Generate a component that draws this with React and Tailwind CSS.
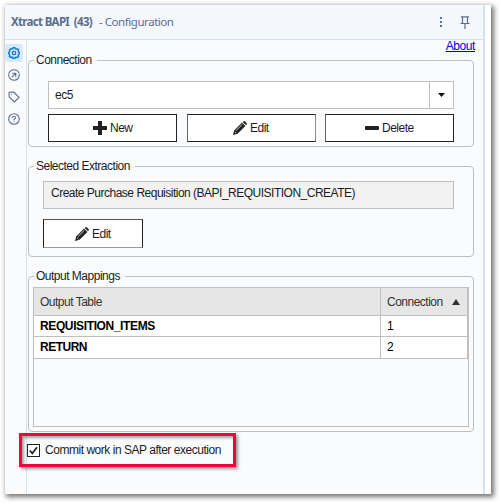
import React from "react";

function Group({ title, className, children }) {
  return (
    <fieldset className={"w-[446px] min-w-0 rounded-[4px] border border-[#bfbfbf] pl-[5px] " + className}>
      <legend className="h-[17px] pr-[5px] pl-[2px] leading-[17px] whitespace-nowrap">{title}</legend>
      {children}
    </fieldset>
  );
}

function Pencil() {
  return (
    <svg width="14" height="14" viewBox="0 0 14 14" className="shrink-0">
      <path d="M0 14 1.2 9.4 9 1.6 12.4 5 4.6 12.8Z" fill="#222" />
      <path d="M9.7.9 10.5.2Q11.2-.2 12 .4L13.6 2Q14.2 2.8 13.6 3.5L13 4.2Z" fill="#222" />
      <path d="M3.2 9.4 9.3 3.3M2 10.8 3.4 12.1" stroke="#eee" strokeWidth=".8" fill="none" />
    </svg>
  );
}

function Button({ icon, label, className }) {
  return (
    <button className={"flex shrink-0 items-center gap-[3px] border bg-white " + className}>
      {icon}
      {label}
    </button>
  );
}

function SideIcon({ active, children }) {
  return (
    <div className={"flex h-[18px] w-[18px] items-center justify-center rounded-[3px] " + (active ? "bg-[#d5eafd] text-[#1479d2]" : "text-[#5d6d8e]")}>
      <svg width="12" height="12" viewBox="0 0 12 12" fill="none" stroke="currentColor" strokeWidth="1.1" strokeLinecap="round" strokeLinejoin="round">
        {children}
      </svg>
    </div>
  );
}

export default function App() {
  return (
    <div className="h-[503px] w-[500px] overflow-hidden bg-white pt-[5px] pl-[5px] font-['Liberation_Sans',sans-serif] text-[12px] leading-[16px] tracking-[-0.5px] text-[#1c1c1c]">
      <div className="flex h-[489px] w-[486px] bg-white shadow-[2px_2px_5px_1px_rgba(0,0,0,0.55)]">
        <div className="flex w-[478px] flex-col">
          <header className="flex h-[35px] shrink-0 items-center border-b border-[#d6e0ef] bg-[#f4f8fd] pl-[6px] font-['Noto_Sans',sans-serif] text-[#5d6d8e]">
            <span className="w-[88px] text-[11.5px] font-bold tracking-[-0.68px] whitespace-nowrap">Xtract BAPI&nbsp; (43)</span>
            <span className="text-[11.5px] tracking-[-0.45px] whitespace-nowrap">- Configuration</span>
            <svg className="mr-[17px] ml-auto" width="4" height="12" fill="#5d6d8e">
              <path d="M1 1h2v2H1zM1 5h2v2H1zM1 9h2v2H1z" />
            </svg>
            <svg className="mt-px mr-[13px]" width="10" height="13" viewBox="0 0 10 13" fill="none" stroke="#5d6d8e" strokeWidth="1.2">
              <path d="M1 .8h8M2.5 1v6M7.5 1v6M.5 7.5h9M5 8v5" />
            </svg>
          </header>
          <div className="flex min-h-0 grow bg-[#fafbfd]">
            <nav className="flex w-[22px] shrink-0 flex-col gap-[4px] border-r border-[#d6e0ef] pt-[4px]">
              <SideIcon active>
                <path d="M5 .7h2l.4 1.2 1 .4 1.1-.5 1.2 1.3-.5 1.1.4 1 1 .4v1.2l-1.1.5-.4 1 .5 1.1-1.3 1.2-1.1-.5-1 .4-.3 1H5.1l-.4-1.1-1-.4-1.1.5-1.3-1.2.5-1.1-.4-1-1-.4V5.4l1.1-.4.4-1-.5-1.1 1.3-1.2 1.1.5 1-.4Z" strokeWidth="1.4" />
                <circle cx="6" cy="6" r="1.7" strokeWidth="1.3" />
              </SideIcon>
              <SideIcon>
                <circle cx="6" cy="6" r="5.3" strokeDasharray="13 1.2 2 1.2" />
                <path d="M4.2 7.8 7.6 4.4M4.6 4.2h3.2v3.2" />
              </SideIcon>
              <SideIcon>
                <path d="M1 1.2 5.8 1 11 6.4 6.4 11 1.2 5.8Z" />
                <path d="M3.3 3.3h.1" />
              </SideIcon>
              <SideIcon>
                <circle cx="6" cy="6" r="5.3" />
                <path d="M4.4 4.8Q4.5 3.3 6 3.3T7.6 4.7Q7.6 5.5 6 6.4V7M6 8.7v.1" />
              </SideIcon>
            </nav>
            <main className="flex min-w-0 grow flex-col pl-px">
              <div className="flex h-[12px] shrink-0 justify-end pr-[8px]">
                <a className="h-[12px] leading-[13px] tracking-[-0.4px] text-[#0000ee] underline">About</a>
              </div>
              <Group title="Connection" className="h-[95px]">
                <div className="mt-[12px] ml-[14px] flex h-[28px] w-[406px] border border-[#bfbfbf] bg-white">
                  <span className="grow pl-[6px] leading-[26px]">ec5</span>
                  <span className="flex w-[24px] items-center justify-center border-l border-[#bfbfbf]">
                    <svg width="7" height="4" fill="#111"><path d="M0 0h7L3.5 4Z" /></svg>
                  </span>
                </div>
                <div className="mt-[5px] ml-[14px] flex">
                  <Button className="h-[28px] w-[129px] border-[#222] pl-[44px]" label="New" icon={<svg width="14" height="14" fill="#222"><path d="M5 0h4v5h5v4H9v5H5V9H0V5h5Z" /></svg>} />
                  <Button className="ml-[10px] h-[28px] w-[129px] border-[#222] border-r-[#888] border-l-[#666] pl-[45px]" label="Edit" icon={<Pencil />} />
                  <Button className="ml-[9px] h-[28px] w-[129px] border-[#222] border-l-[#666] pl-[39px]" label="Delete" icon={<svg width="14" height="4" fill="#222"><rect width="14" height="4" rx="1" /></svg>} />
                </div>
              </Group>
              <Group title="Selected Extraction" className="mt-[11px] h-[99px]">
                <div className="mt-[6px] ml-[9px] h-[28px] w-[411px] border border-[#bfbfbf] bg-[#f2f2f2] pl-[7px] leading-[22px] whitespace-nowrap">Create Purchase Requisition (BAPI_REQUISITION_CREATE)</div>
                <Button className="mt-[10px] ml-[9px] h-[29px] w-[100px] border-[#222] border-t-[#555] border-b-[#999] pl-[31px]" label="Edit" icon={<Pencil />} />
              </Group>
              <Group title="Output Mappings" className="mt-[11px] h-[164px]">
                <div className="mt-[2px] -ml-px h-[140px] w-[436px] border border-[#bfbfbf]">
                  <div className="flex h-[28px] border-b border-[#bfbfbf] bg-[#e6e6e6] leading-[28px] text-[#333]">
                    <span className="w-[347px] border-r border-[#bfbfbf] pl-[6px]">Output Table</span>
                    <span className="flex grow items-center border-r border-[#bfbfbf] pl-[6px]">
                      Connection
                      <svg className="mr-[7px] ml-auto" width="8" height="6" fill="#333"><path d="M0 6h8L4 0Z" /></svg>
                    </span>
                  </div>
                  <div className="flex h-[21px] border-b border-[#bfbfbf] bg-white leading-[20px] text-black">
                    <span className="w-[347px] border-r border-[#bfbfbf] pl-[6px] font-bold tracking-[-0.38px]">REQUISITION_ITEMS</span>
                    <span className="grow border-r border-[#bfbfbf] pl-[6px]">1</span>
                  </div>
                  <div className="flex h-[22px] border-b border-[#bfbfbf] bg-white leading-[21px] text-black">
                    <span className="w-[347px] border-r border-[#bfbfbf] pl-[6px] font-bold">RETURN</span>
                    <span className="grow border-r border-[#bfbfbf] pl-[6px]">2</span>
                  </div>
                </div>
              </Group>
              <div className="mt-px -ml-[9px] flex h-[34px] w-[217px] shrink-0 items-center border-[3px] border-[#f7003c] pl-[5px] shadow-[2px_2px_3px_rgba(0,0,0,0.4),inset_2px_2px_3px_rgba(0,0,0,0.35)]">
                <svg className="mr-[5px] shrink-0" width="13" height="13" viewBox="0 0 13 13">
                  <rect x=".5" y=".5" width="12" height="12" fill="#fff" stroke="#222" />
                  <path d="m2.8 6.5 2.5 2.8L10 3.2" fill="none" stroke="#222" strokeWidth="1.7" />
                </svg>
                <span className="mb-px tracking-[-0.47px] whitespace-nowrap">Commit work in SAP after execution</span>
              </div>
            </main>
          </div>
        </div>
        <div className="w-[2px] bg-[#d6e1f0]" />
      </div>
    </div>
  );
}
